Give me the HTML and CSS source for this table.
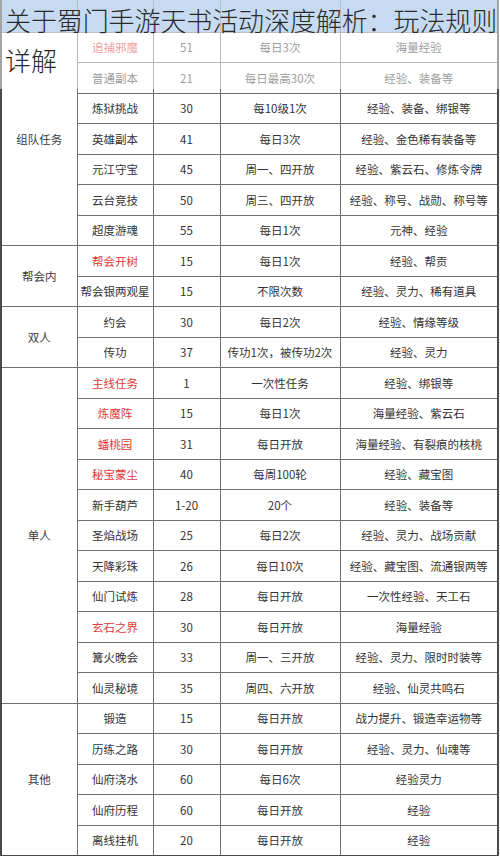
FILE: index.html
```html
<!DOCTYPE html>
<html lang="zh-CN">
<head>
<meta charset="utf-8">
<title>关于蜀门手游天书活动深度解析：玩法规则详解</title>
<link rel="stylesheet" href="styles.css">
</head>
<body>
<div class="page">
  <table class="grid">
    <colgroup>
      <col class="c-type"><col class="c-name"><col class="c-lv"><col class="c-time"><col class="c-reward">
    </colgroup>
    <thead>
      <tr class="head"><th></th><th></th><th></th><th></th><th></th></tr>
    </thead>
    <tbody>
      <tr><td class="group" rowspan="7">组队任务</td><td class="red">追捕邪魔</td><td>51</td><td>每日3次</td><td>海量经验</td></tr>
      <tr><td>普通副本</td><td>21</td><td>每日最高30次</td><td>经验、装备等</td></tr>
      <tr><td>炼狱挑战</td><td>30</td><td>每10级1次</td><td>经验、装备、绑银等</td></tr>
      <tr><td>英雄副本</td><td>41</td><td>每日3次</td><td>经验、金色稀有装备等</td></tr>
      <tr><td>元江守宝</td><td>45</td><td>周一、四开放</td><td>经验、紫云石、修炼令牌</td></tr>
      <tr><td>云台竞技</td><td>50</td><td>周三、四开放</td><td>经验、称号、战勋、称号等</td></tr>
      <tr><td>超度游魂</td><td>55</td><td>每日1次</td><td>元神、经验</td></tr>

      <tr><td class="group" rowspan="2">帮会内</td><td class="red">帮会开树</td><td>15</td><td>每日1次</td><td>经验、帮贡</td></tr>
      <tr><td>帮会银两观星</td><td>15</td><td>不限次数</td><td>经验、灵力、稀有道具</td></tr>

      <tr><td class="group" rowspan="2">双人</td><td>约会</td><td>30</td><td>每日2次</td><td>经验、情缘等级</td></tr>
      <tr><td>传功</td><td>37</td><td>传功1次，被传功2次</td><td>经验、灵力</td></tr>

      <tr><td class="group" rowspan="11">单人</td><td class="red">主线任务</td><td>1</td><td>一次性任务</td><td>经验、绑银等</td></tr>
      <tr><td class="red">炼魔阵</td><td>15</td><td>每日1次</td><td>海量经验、紫云石</td></tr>
      <tr><td class="red">蟠桃园</td><td>31</td><td>每日开放</td><td>海量经验、有裂痕的核桃</td></tr>
      <tr><td class="red">秘宝蒙尘</td><td>40</td><td>每周100轮</td><td>经验、藏宝图</td></tr>
      <tr><td>新手葫芦</td><td>1-20</td><td>20个</td><td>经验、装备等</td></tr>
      <tr><td>圣焰战场</td><td>25</td><td>每日2次</td><td>经验、灵力、战场贡献</td></tr>
      <tr><td>天降彩珠</td><td>26</td><td>每日10次</td><td>经验、藏宝图、流通银两等</td></tr>
      <tr><td>仙门试炼</td><td>28</td><td>每日开放</td><td>一次性经验、天工石</td></tr>
      <tr><td class="red">玄石之界</td><td>30</td><td>每日开放</td><td>海量经验</td></tr>
      <tr><td>篝火晚会</td><td>33</td><td>周一、三开放</td><td>经验、灵力、限时时装等</td></tr>
      <tr><td>仙灵秘境</td><td>35</td><td>周四、六开放</td><td>经验、仙灵共鸣石</td></tr>

      <tr><td class="group" rowspan="5">其他</td><td>锻造</td><td>15</td><td>每日开放</td><td>战力提升、锻造幸运物等</td></tr>
      <tr><td>历练之路</td><td>30</td><td>每日开放</td><td>经验、灵力、仙魂等</td></tr>
      <tr><td>仙府浇水</td><td>60</td><td>每日6次</td><td>经验灵力</td></tr>
      <tr><td>仙府历程</td><td>60</td><td>每日开放</td><td>经验</td></tr>
      <tr><td>离线挂机</td><td>20</td><td>每日开放</td><td>经验</td></tr>
    </tbody>
  </table>
  <div class="veil">
    <h1 class="title">关于蜀门手游天书活动深度解析：玩法规则详解</h1>
  </div>
</div>
</body>
</html>
```

FILE: styles.css
```css
html, body {
  margin: 0;
  padding: 0;
  background: #ffffff;
}

.page {
  position: relative;
  width: 500px;
  height: 856px;
  overflow: hidden;
  font-family: "Noto Sans CJK SC", "Noto Sans", sans-serif;
}

.grid {
  width: 499px;
  table-layout: fixed;
  border-collapse: collapse;
  border-left: 2px solid #4a4a4a;
  border-right: 2px solid #4a4a4a;
  border-bottom: 2px solid #4a4a4a;
}

.c-type { width: 76px; }
.c-name { width: 76px; }
.c-lv { width: 67px; }
.c-time { width: 120px; }
.c-reward { width: 158px; }

.head {
  height: 32px;
  background: #8db4e2;
}

.head th {
  border: 1px solid #7a7a7a;
  border-top: none;
}

.grid tbody tr {
  height: 30.5px;
}

.grid td {
  border: 1px solid #707070;
  padding: 0;
  text-align: center;
  vertical-align: middle;
  font-size: 11.5px;
  line-height: 14px;
  color: #333333;
  white-space: nowrap;
}

.grid td.group {
  color: #3a3a3a;
}

.grid td.red {
  color: #e03a3a;
}

.veil {
  position: absolute;
  top: 0;
  left: 0;
  width: 500px;
  height: 89px;
  background: rgba(255, 255, 255, 0.5);
}

.title {
  margin: 0;
  padding: 0 0 0 5px;
  font-size: 26px;
  line-height: 40px;
  font-weight: 300;
  color: #2a2a2a;
  letter-spacing: -0.1px;
}
```
